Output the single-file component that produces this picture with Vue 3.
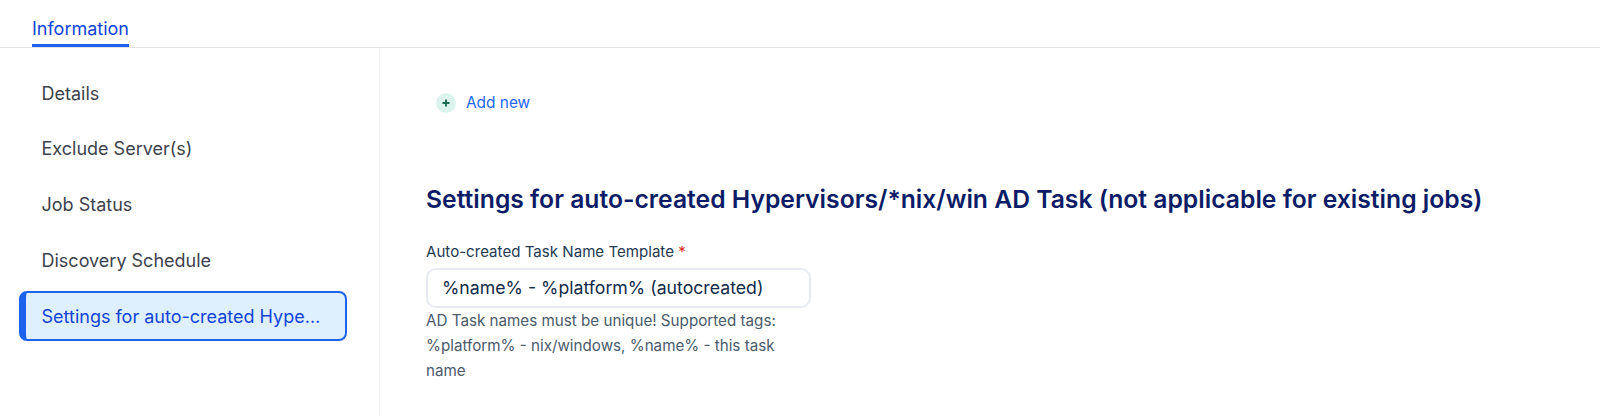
<template>
  <div class="page">
    <nav class="tabs">
      <a class="tab">Information</a>
    </nav>
    <div class="body">
      <aside class="sidebar">
        <a
          v-for="item in menuItems"
          :key="item"
          class="menu-item"
          :class="{ active: item === activeItem }"
        >
          <span class="menu-label">{{ item }}</span>
        </a>
      </aside>
      <main class="content">
        <button type="button" class="add-button">
          <span class="add-icon">
            <svg width="10" height="10" viewBox="0 0 10 10">
              <path d="M5 1.5v7M1.5 5h7" stroke="#14694f" stroke-width="1.8" fill="none" />
            </svg>
          </span>
          Add new
        </button>
        <h2 class="title">Settings for auto-created Hypervisors/*nix/win AD Task (not applicable for existing jobs)</h2>
        <div class="field">
          <label class="label">Auto-created Task Name Template <span class="req">*</span></label>
          <input class="input" type="text" v-model="template" />
          <p class="help">AD Task names must be unique! Supported tags: %platform% - nix/windows, %name% - this task name</p>
        </div>
      </main>
    </div>
  </div>
</template>

<script setup>
import { ref } from 'vue'

const menuItems = [
  'Details',
  'Exclude Server(s)',
  'Job Status',
  'Discovery Schedule',
  'Settings for auto-created Hype…'
]
const activeItem = menuItems[4]
const template = ref('%name% - %platform% (autocreated)')
</script>

<style>
html,
body {
  margin: 0;
  background: #fff;
}
</style>

<style scoped>
.page {
  height: 416px;
  overflow: hidden;
  font-family: Inter, "Liberation Sans", sans-serif;
  background: #fff;
}

.tabs {
  display: flex;
  height: 48px;
  padding-left: 32px;
  box-sizing: border-box;
  border-bottom: 1px solid #e2e4e9;
}

.tab {
  height: 47px;
  box-sizing: border-box;
  padding-top: 19px;
  font-size: 18px;
  line-height: 20px;
  color: #1244d6;
  border-bottom: 3px solid #1d62ee;
}

.body {
  display: flex;
  height: 368px;
}

.sidebar {
  width: 380px;
  box-sizing: border-box;
  padding: 20px 32px 0 19px;
  border-right: 1px solid #eeeef3;
  display: flex;
  flex-direction: column;
  gap: 5.85px;
}

.menu-item {
  height: 50px;
  flex: none;
  box-sizing: border-box;
  padding: 0 23px 0 22.5px;
  display: flex;
  align-items: center;
  font-size: 18px;
  color: #3d424d;
}

.menu-label {
  white-space: nowrap;
}

.menu-item.active {
  padding-left: 15.5px;
  padding-right: 12px;
  color: #1244d6;
  background: #deeffe;
  border: 2px solid #1d62ee;
  border-left-width: 7px;
  border-radius: 8px;
}

.content {
  flex: 1;
  padding: 0 0 0 46px;
}

.add-button {
  display: flex;
  align-items: center;
  gap: 10px;
  margin: 45px 0 0 10px;
  padding: 0;
  border: none;
  background: none;
  font-family: inherit;
  font-size: 15.4px;
  line-height: 20px;
  color: #2166f0;
}

.add-icon {
  width: 20px;
  height: 20px;
  border-radius: 50%;
  background: #dcf3ee;
  display: flex;
  align-items: center;
  justify-content: center;
}

.title {
  margin: 71px 0 0;
  font-size: 24.7px;
  line-height: 30px;
  font-weight: 600;
  color: #0c1c66;
  white-space: nowrap;
}

.field {
  width: 385px;
  margin-top: 28px;
}

.label {
  display: block;
  font-size: 15.1px;
  line-height: 20px;
  color: #253a53;
}

.req {
  color: #d92d20;
}

.input {
  display: block;
  width: 100%;
  height: 40px;
  margin-top: 6px;
  padding: 0 14px 2px;
  box-sizing: border-box;
  border: 2px solid #e7ebf1;
  border-radius: 10px;
  font-family: inherit;
  font-size: 17.7px;
  color: #142a4a;
  outline: none;
}

.help {
  margin: 0;
  font-size: 15.2px;
  line-height: 25px;
  color: #4b5a6c;
}
</style>
